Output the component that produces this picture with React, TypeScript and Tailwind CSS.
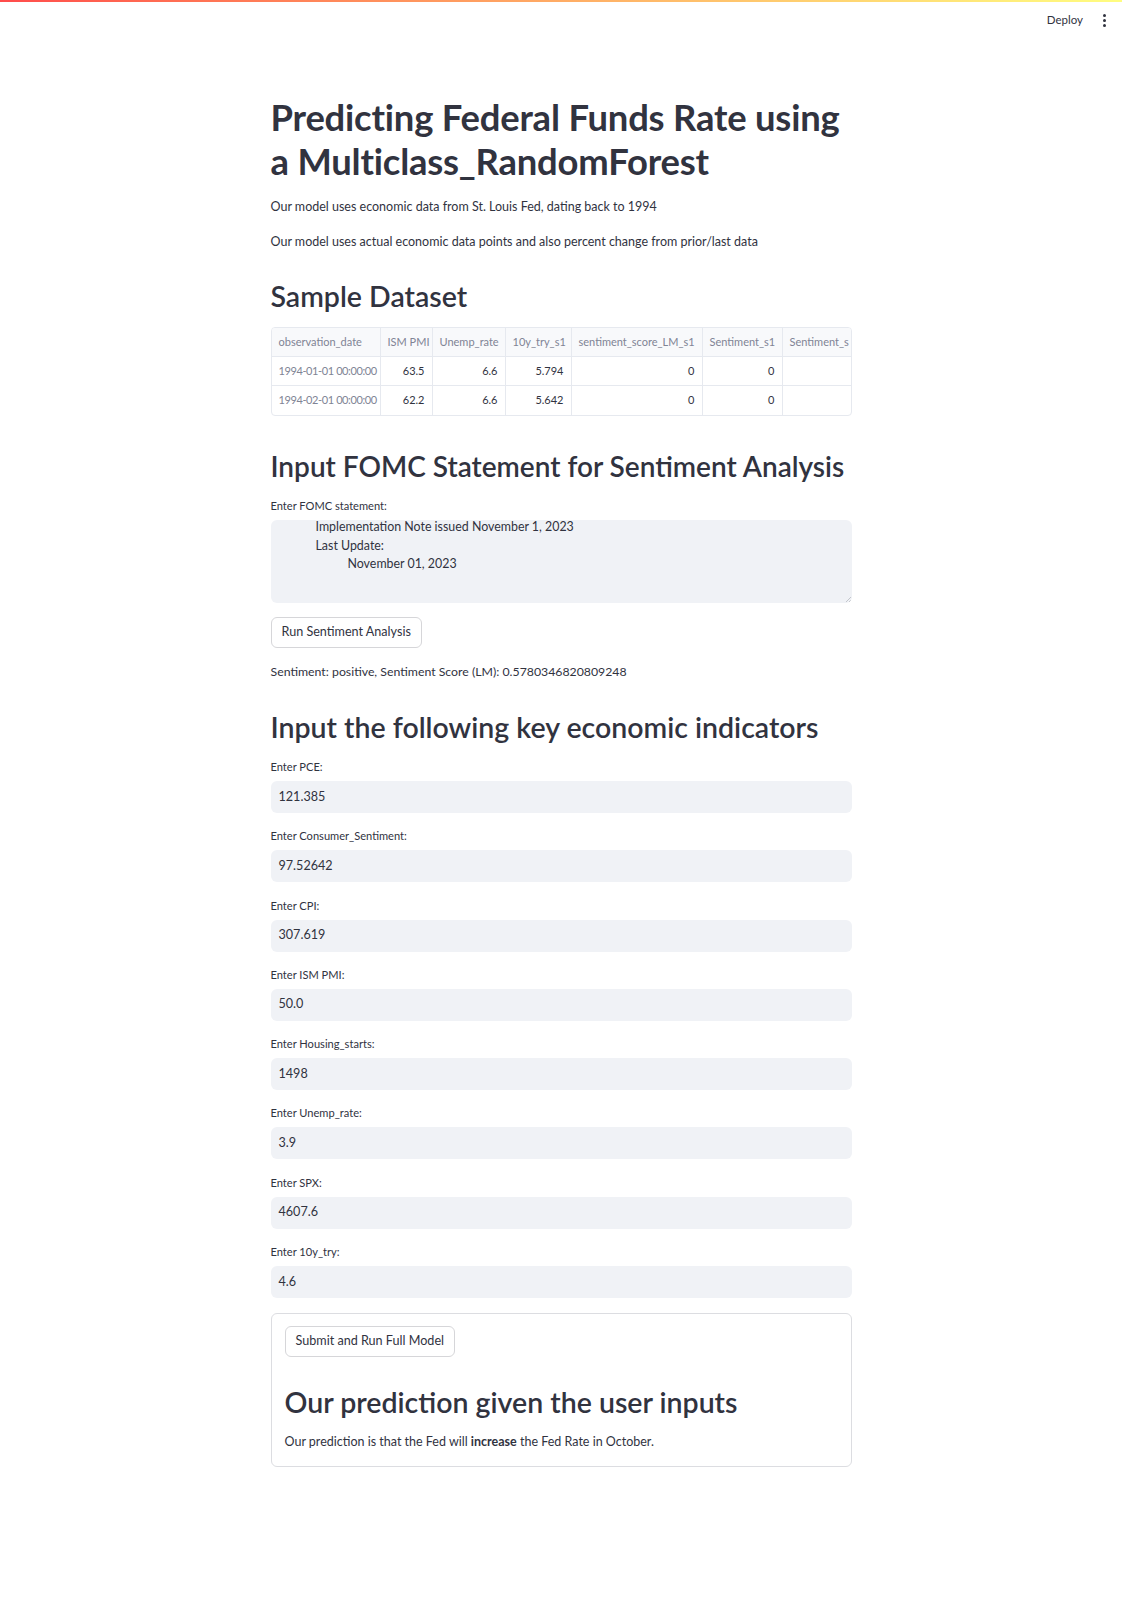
import React from 'react';

const font = { fontFamily: 'Lato, "Source Sans Pro", "Noto Sans", sans-serif' };

const columns = [
  { key: 'date', label: 'observation_date', w: 'w-[109px]' },
  { key: 'ism', label: 'ISM PMI', w: 'w-[52px]' },
  { key: 'unemp', label: 'Unemp_rate', w: 'w-[73px]' },
  { key: 'try', label: '10y_try_s1', w: 'w-[66px]' },
  { key: 'lm', label: 'sentiment_score_LM_s1', w: 'w-[131px]' },
  { key: 's1', label: 'Sentiment_s1', w: 'w-[80px]' },
  { key: 's2', label: 'Sentiment_s', w: 'w-[70px]' },
];

const rows = [
  { date: '1994-01-01 00:00:00', ism: '63.5', unemp: '6.6', try: '5.794', lm: '0', s1: '0', s2: '' },
  { date: '1994-02-01 00:00:00', ism: '62.2', unemp: '6.6', try: '5.642', lm: '0', s1: '0', s2: '' },
];

const indicators = [
  { label: 'Enter PCE:', value: '121.385' },
  { label: 'Enter Consumer_Sentiment:', value: '97.52642' },
  { label: 'Enter CPI:', value: '307.619' },
  { label: 'Enter ISM PMI:', value: '50.0' },
  { label: 'Enter Housing_starts:', value: '1498' },
  { label: 'Enter Unemp_rate:', value: '3.9' },
  { label: 'Enter SPX:', value: '4607.6' },
  { label: 'Enter 10y_try:', value: '4.6' },
];

function Header() {
  return (
    <div className="h-[50px] flex items-center justify-end pr-[16px]">
      <span className="text-[11.5px] mr-[20px] mt-[-14px]">Deploy</span>
      <span className="flex flex-col gap-[2px] mt-[-14px]">
        <span className="w-[3px] h-[3px] rounded-full bg-[#31333f]" />
        <span className="w-[3px] h-[3px] rounded-full bg-[#31333f]" />
        <span className="w-[3px] h-[3px] rounded-full bg-[#31333f]" />
      </span>
    </div>);

}

function DataTable() {
  return (
    <div className="mt-[13px] border border-[#e6e9ef] rounded-[4px] overflow-hidden w-[581px] text-[11px]">
      <div className="flex bg-[#f8f9fb] h-[29px] border-b border-[#e6e9ef] text-[#808495]">
        {columns.map((c, i) =>
        <div
          key={c.key}
          className={`${c.w} shrink-0 flex items-center px-[7px] whitespace-nowrap overflow-hidden ${i < columns.length - 1 ? 'border-r border-[#e6e9ef]' : ''}`}>
          
            {c.label}
          </div>
        )}
      </div>
      {rows.map((r, ri) =>
      <div key={ri} className={`flex h-[29px] ${ri === 0 ? 'border-b border-[#e6e9ef]' : ''}`}>
          {columns.map((c, i) =>
        <div
          key={c.key}
          className={`${c.w} shrink-0 flex items-center px-[7px] whitespace-nowrap ${i === 0 ? 'text-[#808495] tracking-[-0.4px]' : 'justify-end text-[#31333f]'} ${i < columns.length - 1 ? 'border-r border-[#e6e9ef]' : ''}`}>
          
              {(r as Record<string, string>)[c.key]}
            </div>
        )}
        </div>
      )}
    </div>);

}

function Button({ children }: {children: React.ReactNode;}) {
  return (
    <button className="h-[31px] px-[10px] rounded-[6px] border border-[#d6d6d9] bg-white text-[12.6px] text-[#31333f]">
      {children}
    </button>);

}

export default function App() {
  return (
    <div style={font} className="min-h-[1600px] bg-white text-[#31333f]">
      <div className="h-[2px] bg-gradient-to-r from-[#ff4b4b] to-[#fffd80]" />
      <Header />
      <main className="w-[581px] mx-auto">
        <h1 className="mt-[43px] text-[36.4px] leading-[44px] font-bold tracking-[-0.2px]">
          Predicting Federal Funds Rate using a Multiclass_RandomForest
        </h1>
        <p className="mt-[13px] text-[12.5px] leading-[21px]">
          Our model uses economic data from St. Louis Fed, dating back to 1994
        </p>
        <p className="mt-[14px] text-[12.5px] leading-[21px]">
          Our model uses actual economic data points and also percent change from prior/last data
        </p>

        <h2 className="mt-[26px] text-[28.5px] leading-[36px] font-semibold">Sample Dataset</h2>
        <DataTable />

        <h2 className="mt-[32px] text-[28px] leading-[36px] font-semibold whitespace-nowrap">
          Input FOMC Statement for Sentiment Analysis
        </h2>
        <div className="mt-[13px] text-[11.1px] leading-[18px]">Enter FOMC statement:</div>
        <div className="relative mt-[5px] h-[83px] rounded-[6px] bg-[#f0f2f6] text-[12.4px] leading-[18.5px] overflow-hidden">
          <div className="pl-[45px] mt-[-2px]">Implementation Note issued November 1, 2023</div>
          <div className="pl-[45px]">Last Update:</div>
          <div className="pl-[77px]">November 01, 2023</div>
          <svg className="absolute right-[1px] bottom-[1px]" width="6" height="6" viewBox="0 0 6 6">
            <path d="M6 1 L1 6 M6 4 L4 6" stroke="#b8bac2" strokeWidth="0.8" />
          </svg>
        </div>
        <div className="mt-[14px]">
          <Button>Run Sentiment Analysis</Button>
        </div>
        <p className="mt-[13px] text-[12.3px] leading-[21px]">
          Sentiment: positive, Sentiment Score (LM): 0.5780346820809248
        </p>

        <h2 className="mt-[27px] text-[28.5px] leading-[36px] font-semibold">
          Input the following key economic indicators
        </h2>
        <div className="mt-[13px] flex flex-col gap-[14.3px]">
          {indicators.map((it) =>
          <div key={it.label}>
              <div className="text-[11.1px] leading-[18px]">{it.label}</div>
              <div className="mt-[5px] h-[32px] rounded-[6px] bg-[#f0f2f6] flex items-center px-[8px] text-[12.6px]">
                {it.value}
              </div>
            </div>
          )}
        </div>

        <div className="mt-[15px] border border-[#dcdde1] rounded-[6px] px-[13px] pt-[12px] pb-[14px]">
          <Button>Submit and Run Full Model</Button>
          <h2 className="mt-[27px] text-[28.5px] leading-[36px] font-semibold">
            Our prediction given the user inputs
          </h2>
          <p className="mt-[11px] text-[12.5px] leading-[21px]">
            Our prediction is that the Fed will <b className="font-bold">increase</b> the Fed Rate in October.
          </p>
        </div>
      </main>
    </div>);

}
